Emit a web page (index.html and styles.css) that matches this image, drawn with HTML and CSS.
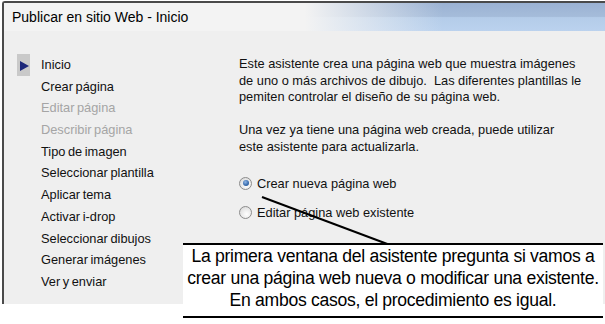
FILE: index.html
```html
<!DOCTYPE html>
<html>
<head>
<meta charset="utf-8">
<link rel="stylesheet" href="styles.css">
</head>
<body>
<div class="window">
  <div class="titlebar">Publicar en sitio Web - Inicio</div>
  <div class="main">
    <ul class="nav">
      <li class="current"><span class="marker"><span class="tri"></span></span>Inicio</li>
      <li><span class="marker"></span>Crear página</li>
      <li class="disabled"><span class="marker"></span>Editar página</li>
      <li class="disabled"><span class="marker"></span>Describir página</li>
      <li><span class="marker"></span>Tipo de imagen</li>
      <li><span class="marker"></span>Seleccionar plantilla</li>
      <li><span class="marker"></span>Aplicar tema</li>
      <li><span class="marker"></span>Activar i-drop</li>
      <li><span class="marker"></span>Seleccionar dibujos</li>
      <li><span class="marker"></span>Generar imágenes</li>
      <li><span class="marker"></span>Ver y enviar</li>
    </ul>
    <div class="content">
      <p class="para">Este asistente crea una página web que muestra imágenes<br>de uno o más archivos de dibujo.&nbsp; Las diferentes plantillas le<br>pemiten controlar el diseño de su página web.</p>
      <p class="para">Una vez ya tiene una página web creada, puede utilizar<br>este asistente para actualizarla.</p>
      <div class="options">
        <div class="option"><span class="radio checked"></span>Crear nueva página web</div>
        <div class="option"><span class="radio"></span>Editar página web existente</div>
      </div>
    </div>
  </div>
</div>
<svg class="pointer" width="605" height="324" viewBox="0 0 605 324">
  <line x1="262" y1="197" x2="390" y2="245" stroke="#000" stroke-width="2"/>
</svg>
<div class="callout">La primera ventana del asistente pregunta si vamos a<br>crear una página web nueva o modificar una existente.<br>En ambos casos, el procedimiento es igual.</div>
</body>
</html>
```

FILE: styles.css
```css
html, body {
  margin: 0;
  padding: 0;
  background: #ffffff;
}
body {
  width: 605px;
  height: 324px;
  overflow: hidden;
  position: relative;
  font-family: "Liberation Sans", Arial, sans-serif;
}
.window {
  margin: 1px 0 0 2px;
  width: 601px;
  height: 301px;
  border-top: 2px solid #4a4a4a;
  border-left: 2px solid #4a4a4a;
  border-top-left-radius: 3px;
  background: #efefef;
  display: flex;
  flex-direction: column;
}
.titlebar {
  height: 28px;
  box-sizing: border-box;
  padding: 6px 0 0 8px;
  font-size: 14px;
  line-height: 17px;
  color: #000;
  background:
    linear-gradient(to right, #f3f3f3 0%, #f3f3f3 50%, rgba(243,243,243,0) 73%),
    linear-gradient(#9bb2d3 0%, #a5bcda 48%, #b4cce9 52%, #bbd2ee 100%);
}
.main {
  flex: 1;
  display: flex;
}
.nav {
  list-style: none;
  margin: 0;
  padding: 23px 0 0 13px;
  width: 235px;
  box-sizing: border-box;
  font-size: 12.8px;
  line-height: 21.7px;
  color: #111;
  word-spacing: -1px;
}
.nav li {
  display: flex;
  align-items: stretch;
  height: 21.7px;
}
.nav li.disabled {
  color: #a5a5a5;
}
.marker {
  width: 13px;
  margin-right: 11px;
  display: flex;
  align-items: center;
  justify-content: center;
}
.current .marker {
  background: #c9c9c9;
}
.tri {
  width: 0;
  height: 0;
  border-top: 5.5px solid transparent;
  border-bottom: 5.5px solid transparent;
  border-left: 9px solid #1b2679;
  margin-left: 1px;
  margin-top: 2px;
}
.content {
  flex: 1;
  padding-top: 25px;
  font-size: 12.8px;
  line-height: 16.5px;
  color: #111;
}
.para {
  margin: 0 0 16.8px 0;
}
.options {
  padding-top: 3.5px;
  display: flex;
  flex-direction: column;
  gap: 12.8px;
}
.option {
  display: flex;
  align-items: center;
  line-height: 16.5px;
}
.radio {
  width: 13px;
  height: 13px;
  box-sizing: border-box;
  border-radius: 50%;
  border: 1px solid #8c8c8c;
  background: radial-gradient(circle at 60% 65%, #ffffff 0%, #e6e6e6 60%, #cfcfcf 100%);
  margin-right: 5px;
  margin-top: -1px;
  display: flex;
  align-items: center;
  justify-content: center;
}
.radio.checked::after {
  content: "";
  width: 6px;
  height: 6px;
  border-radius: 50%;
  background: radial-gradient(circle at 40% 35%, #8fb6e6 0%, #3c6fb0 55%, #1f4a86 100%);
}
.pointer {
  position: absolute;
  left: 0;
  top: 0;
  pointer-events: none;
}
.callout {
  position: absolute;
  left: 183px;
  top: 243px;
  width: 420px;
  border-top: 2px solid #000;
  border-bottom: 2px solid #000;
  padding-bottom: 4px;
  background: #fff;
  text-align: center;
  white-space: nowrap;
  font-size: 17.6px;
  letter-spacing: -0.3px;
  line-height: 22.2px;
  color: #000;
}
```
